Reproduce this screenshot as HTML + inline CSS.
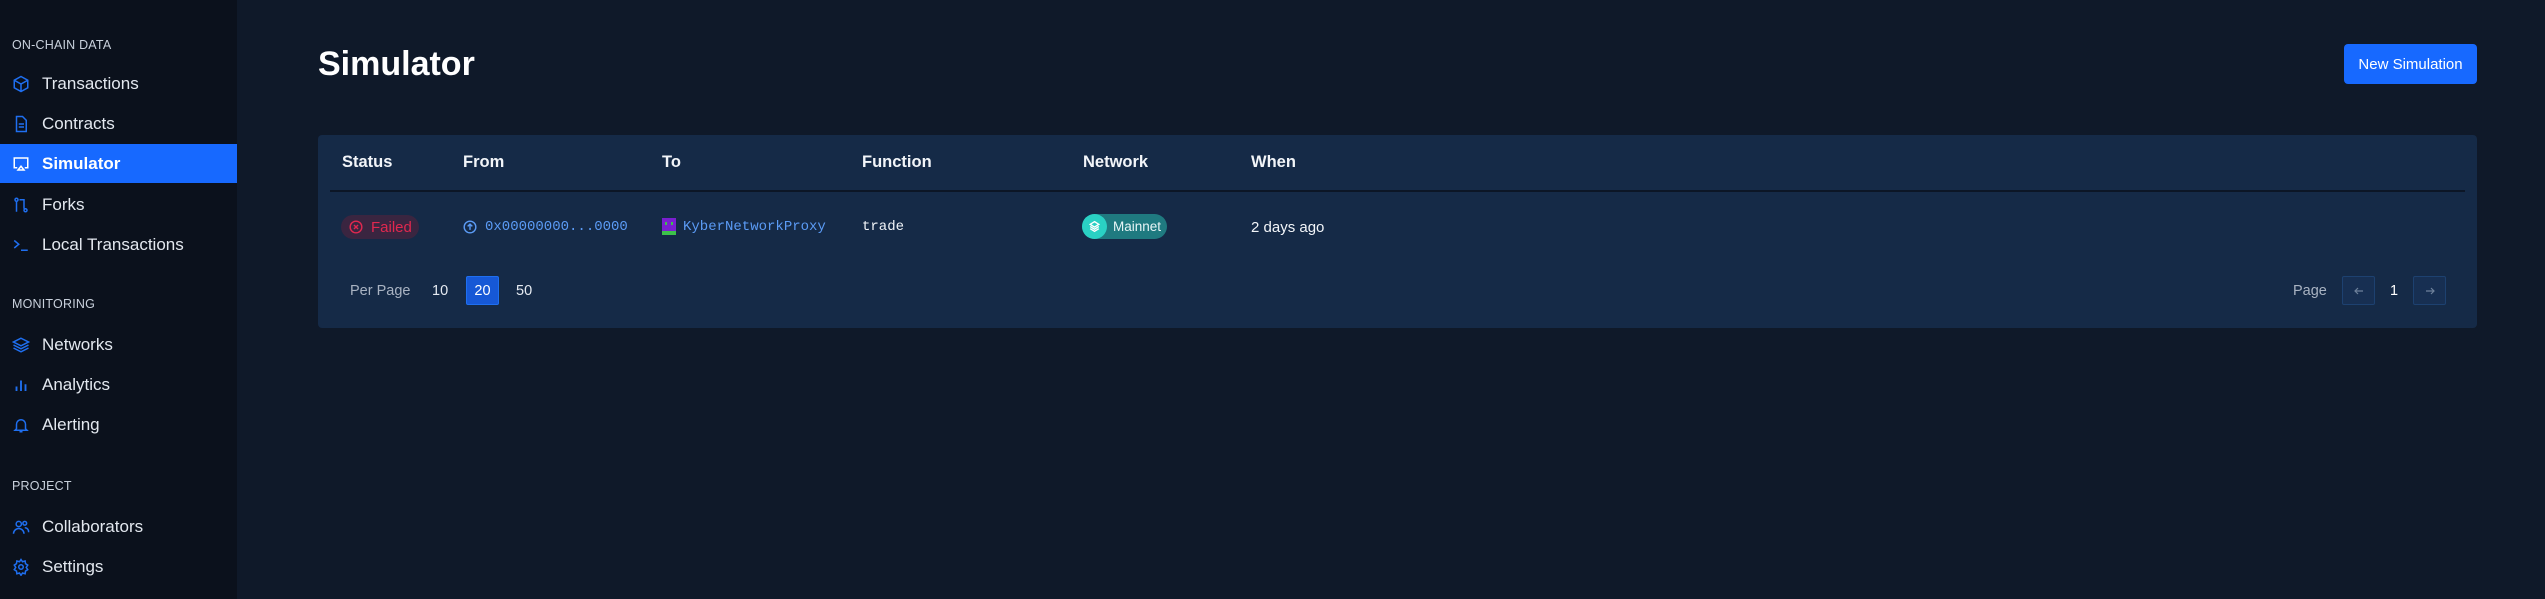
<!DOCTYPE html>
<html><head><meta charset="utf-8"><style>
*{box-sizing:border-box;margin:0;padding:0}
body{width:2545px;height:599px;background:#0f1929;font-family:"Liberation Sans",sans-serif;color:#e6ebf2;position:relative;overflow:hidden}
.sb{position:absolute;left:0;top:0;width:237px;height:599px;background:#0b111c}
.lab{position:absolute;left:12px;font-size:12.5px;color:#c9d1dc;letter-spacing:.2px}
.it{position:absolute;left:0;width:237px;height:39px;display:flex;align-items:center;font-size:17px;color:#e3e8ef}
.it svg{position:absolute;left:12px;width:18px;height:18px}
.it span{position:absolute;left:42px;top:10px}
.it.act{background:#1769ff;color:#fff;font-weight:bold}
.abs{position:absolute}
h1{position:absolute;left:318px;top:45px;font-size:34px;font-weight:bold;color:#fff}
.btn{position:absolute;left:2344px;top:44px;width:133px;height:40px;background:#1769ff;border-radius:4px;color:#fff;font-size:15px;display:flex;align-items:center;justify-content:center}
.card{position:absolute;left:318px;top:135px;width:2159px;height:193px;background:#152a47;border-radius:4px}
.th{position:absolute;top:18px;font-size:16.5px;font-weight:bold;color:#f2f5f9}
.div{position:absolute;left:12px;right:12px;top:55px;height:2px;background:#0c1626}
.mono{font-family:"Liberation Mono",monospace;font-size:14px}
</style></head><body>
<div class="sb">
<div class="lab" style="top:38px">ON-CHAIN DATA</div>
<div class="it" style="top:64px"><svg viewBox="0 0 24 24" fill="none" stroke="#1f6ff0" stroke-width="2"><path d="M12 2l9 5v10l-9 5-9-5V7z M3 7l9 5 9-5 M12 12v10"/></svg><span>Transactions</span></div>
<div class="it" style="top:104px"><svg viewBox="0 0 24 24" fill="none" stroke="#1f6ff0" stroke-width="2"><path d="M6 2h8l5 5v15H6z M9 12h7 M9 16h7"/></svg><span>Contracts</span></div>
<div class="it act" style="top:144px"><svg viewBox="0 0 24 24" fill="none" stroke="#fff" stroke-width="2"><path d="M7 17H3V4h18v13h-4 M8 20l4-5 4 5z"/></svg><span>Simulator</span></div>
<div class="it" style="top:185px"><svg viewBox="0 0 24 24" fill="none" stroke="#1f6ff0" stroke-width="2"><circle cx="6" cy="5" r="2"/><circle cx="18" cy="19" r="2"/><path d="M6 7v14 M10 5h6v12"/></svg><span>Forks</span></div>
<div class="it" style="top:225px"><svg viewBox="0 0 24 24" fill="none" stroke="#1f6ff0" stroke-width="2"><path d="M3 6l6 5-6 5 M12 19h9"/></svg><span>Local Transactions</span></div>
<div class="lab" style="top:297px">MONITORING</div>
<div class="it" style="top:325px"><svg viewBox="0 0 24 24" fill="none" stroke="#1f6ff0" stroke-width="2"><path d="M12 3l10 5-10 5L2 8z M2 12l10 5 10-5 M2 16l10 5 10-5"/></svg><span>Networks</span></div>
<div class="it" style="top:365px"><svg viewBox="0 0 24 24" fill="none" stroke="#1f6ff0" stroke-width="2.5"><path d="M6 20v-6 M12 20V6 M18 20v-9"/></svg><span>Analytics</span></div>
<div class="it" style="top:405px"><svg viewBox="0 0 24 24" fill="none" stroke="#1f6ff0" stroke-width="2"><path d="M6 17V11a6 6 0 0112 0v6l2 2H4z M10 21h4"/></svg><span>Alerting</span></div>
<div class="lab" style="top:479px">PROJECT</div>
<div class="it" style="top:507px"><svg viewBox="0 0 24 24" fill="none" stroke="#1f6ff0" stroke-width="2"><circle cx="9" cy="8" r="3.5"/><circle cx="17" cy="7" r="2.5"/><path d="M2 21a7 7 0 0114 0 M17 13a5 5 0 015 6"/></svg><span>Collaborators</span></div>
<div class="it" style="top:547px"><svg viewBox="0 0 24 24" fill="none" stroke="#1f6ff0" stroke-width="2"><circle cx="12" cy="12" r="3"/><path d="M12 2l2 3 3.5-1 .5 3.5 3 2-2 3 2 3-3 2-.5 3.5-3.5-1-2 3-2-3-3.5 1-.5-3.5-3-2 2-3-2-3 3-2 .5-3.5 3.5 1z"/></svg><span>Settings</span></div>
</div>

<h1>Simulator</h1>
<div class="btn">New Simulation</div>

<div class="card">
<div class="th" style="left:24px">Status</div>
<div class="th" style="left:145px">From</div>
<div class="th" style="left:344px">To</div>
<div class="th" style="left:544px">Function</div>
<div class="th" style="left:765px">Network</div>
<div class="th" style="left:933px">When</div>
<div class="div"></div>

<div class="abs" style="left:23px;top:80px;width:78px;height:24px;border-radius:12px;background:#3a2540;color:#e0284f;font-size:15px;display:flex;align-items:center"><svg style="margin-left:8px" width="14" height="14" viewBox="0 0 24 24" fill="none" stroke="#e0284f" stroke-width="2.4"><circle cx="12" cy="12" r="10"/><path d="M8.5 8.5l7 7 M15.5 8.5l-7 7"/></svg><span style="margin-left:8px">Failed</span></div>

<div class="abs mono" style="left:145px;top:84px;color:#5b9bf5;display:flex;align-items:center"><svg width="14" height="14" viewBox="0 0 24 24" fill="none" stroke="#5b9bf5" stroke-width="2.4"><circle cx="12" cy="12" r="10"/><path d="M12 17V8 M8 11l4-4 4 4"/></svg><span style="margin-left:8px">0x00000000...0000</span></div>

<div class="abs mono" style="left:344px;top:83px;color:#5b9bf5;display:flex;align-items:center"><svg width="14" height="17" viewBox="0 0 14 17"><rect width="14" height="17" fill="#7a1fd0"/><rect x="0" y="13" width="14" height="4" fill="#3cc24a"/><rect x="3" y="4" width="2" height="3" fill="#3cc24a"/><rect x="9" y="4" width="2" height="3" fill="#3cc24a"/><rect x="3" y="11" width="8" height="2" fill="#7a1fd0"/></svg><span style="margin-left:7px">KyberNetworkProxy</span></div>

<div class="abs mono" style="left:544px;top:84px;color:#f2f5f9">trade</div>

<div class="abs" style="left:764px;top:79px;width:85px;height:25px;border-radius:13px;background:#1f7a80;display:flex;align-items:center;font-size:13.5px;color:#e8f5f6"><div style="width:25px;height:25px;border-radius:50%;background:#2ad1c4;display:flex;align-items:center;justify-content:center"><svg width="13" height="13" viewBox="0 0 24 24" fill="none" stroke="#fff" stroke-width="2.5"><path d="M12 3l8 5-8 5-8-5z M4 12l8 5 8-5 M4 16l8 5 8-5"/></svg></div><span style="margin-left:6px">Mainnet</span></div>

<div class="abs" style="left:933px;top:84px;font-size:15px;color:#f2f5f9">2 days ago</div>

<div class="abs" style="left:32px;top:148px;font-size:14.5px;color:#a9b3c2">Per Page</div>
<div class="abs" style="left:114px;top:148px;font-size:14.5px;color:#e6ebf2">10</div>
<div class="abs" style="left:148px;top:141px;width:33px;height:29px;background:#1658d6;border:1px solid #1f6ff0;border-radius:2px;font-size:14.5px;color:#fff;display:flex;align-items:center;justify-content:center">20</div>
<div class="abs" style="left:198px;top:148px;font-size:14.5px;color:#e6ebf2">50</div>

<div class="abs" style="left:1975px;top:148px;font-size:14.5px;color:#a9b3c2">Page</div>
<div class="abs" style="left:2024px;top:141px;width:33px;height:29px;border:1px solid #1d4170;background:#172f52;border-radius:2px;display:flex;align-items:center;justify-content:center"><svg width="12" height="12" viewBox="0 0 24 24" fill="none" stroke="#6e819b" stroke-width="2.4"><path d="M20 12H4 M10 6l-6 6 6 6"/></svg></div>
<div class="abs" style="left:2072px;top:148px;font-size:14.5px;color:#fff">1</div>
<div class="abs" style="left:2095px;top:141px;width:33px;height:29px;border:1px solid #1d4170;background:#172f52;border-radius:2px;display:flex;align-items:center;justify-content:center"><svg width="12" height="12" viewBox="0 0 24 24" fill="none" stroke="#6e819b" stroke-width="2.4"><path d="M4 12h16 M14 6l6 6-6 6"/></svg></div>
</div>
</body></html>
